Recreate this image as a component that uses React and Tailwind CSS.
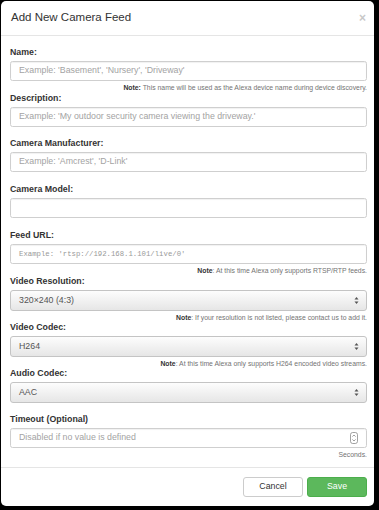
import React from "react";

const F = { fontFamily: '"Liberation Sans", Arial, sans-serif' };

function Label({ children }) {
  return (
    <div className="text-[8.8px] leading-[12px] font-bold text-[#333] mb-[3px]">{children}</div>
  );
}

function TextBox({ placeholder, mono, spinner }) {
  return (
    <div className="h-[20px] border border-[#cfcfcf] rounded-[2.5px] bg-white flex items-center pl-[8px] pr-[6px] shadow-[inset_0_1px_1px_rgba(0,0,0,0.06)]">
      <span
        className={
          mono
            ? "text-[7.3px] text-[#999] flex-1"
            : "text-[8.8px] text-[#a3a3a3] flex-1"
        }
        style={mono ? { fontFamily: '"Liberation Mono", "Courier New", monospace' } : undefined}
      >
        {placeholder}
      </span>
      {spinner && (
        <svg width="8" height="12" viewBox="0 0 8 12" className="mr-[2px]">
          <rect x="0.5" y="0.5" width="7" height="11" rx="2.2" fill="#fff" stroke="#8a8a8a" strokeWidth="0.8" />
          <path d="M2.4 4.6 L4 3 L5.6 4.6" fill="none" stroke="#777" strokeWidth="0.7" />
          <path d="M2.4 7.4 L4 9 L5.6 7.4" fill="none" stroke="#777" strokeWidth="0.7" />
        </svg>
      )}
    </div>
  );
}

function Select({ value }) {
  return (
    <div className="h-[21px] border border-[#c4c4c4] rounded-[3px] bg-gradient-to-b from-[#fdfdfd] to-[#e6e6e6] flex items-center pl-[8px] pr-[6px]">
      <span className="text-[8.8px] text-[#555] flex-1">{value}</span>
      <svg width="5" height="9" viewBox="0 0 5 9" className="mr-[1px]">
        <path d="M0.5 3.6 L2.5 1 L4.5 3.6 Z" fill="#555" />
        <path d="M0.5 5.4 L2.5 8 L4.5 5.4 Z" fill="#555" />
      </svg>
    </div>
  );
}

function Note({ children }) {
  return (
    <div className="text-right text-[6.85px] leading-[9px] text-[#737373] mt-[2px]">{children}</div>
  );
}

export default function App() {
  return (
    <div className="w-[379px] h-[510px] bg-black pt-[1px] pl-[1px] pr-[5px] pb-[4px]" style={F}>
      <div className="h-full bg-white rounded-[5px] flex flex-col">
        <div className="h-[35px] border-b border-[#e5e5e5] flex items-center justify-between pl-[10px] pr-[8px]">
          <div className="text-[11.5px] text-[#333]">Add New Camera Feed</div>
          <div className="text-[12px] font-bold text-[#c8c8c8] leading-none">×</div>
        </div>
        <div className="flex-1 pt-[10px] pl-[9px] pr-[7px]">
          <Label>Name:</Label>
          <TextBox placeholder="Example: 'Basement', 'Nursery', 'Driveway'" />
          <Note>
            <b className="text-[#333]">Note:</b> This name will be used as the Alexa device name during device discovery.
          </Note>

          <Label>Description:</Label>
          <TextBox placeholder="Example: 'My outdoor security camera viewing the driveway.'" />

          <div className="mt-[10px]">
            <Label>Camera Manufacturer:</Label>
            <TextBox placeholder="Example: 'Amcrest', 'D-Link'" />
          </div>

          <div className="mt-[11px]">
            <Label>Camera Model:</Label>
            <TextBox placeholder="" />
          </div>

          <div className="mt-[11px]">
            <Label>Feed URL:</Label>
            <TextBox mono placeholder="Example: 'rtsp://192.168.1.101/live/0'" />
            <Note>
              <b className="text-[#333]">Note</b>: At this time Alexa only supports RTSP/RTP feeds.
            </Note>
          </div>

          <Label>Video Resolution:</Label>
          <Select value="320×240 (4:3)" />
          <Note>
            <b className="text-[#333]">Note</b>: If your resolution is not listed, please contact us to add it.
          </Note>

          <div className="-mt-[1px]">
            <Label>Video Codec:</Label>
          </div>
          <Select value="H264" />
          <Note>
            <b className="text-[#333]">Note</b>: At this time Alexa only supports H264 encoded video streams.
          </Note>

          <div className="-mt-[1px]">
            <Label>Audio Codec:</Label>
          </div>
          <Select value="AAC" />

          <div className="mt-[10px]">
            <Label>Timeout (Optional)</Label>
            <TextBox spinner placeholder="Disabled if no value is defined" />
            <Note>Seconds.</Note>
          </div>
        </div>
        <div className="border-t border-[#e5e5e5] h-[39px] flex items-center justify-end gap-[4px] pr-[7px]">
          <div className="w-[60px] h-[20px] border border-[#ccc] rounded-[3px] bg-white flex items-center justify-center text-[8.8px] text-[#333]">
            Cancel
          </div>
          <div className="w-[60px] h-[20px] border border-[#4cae4c] rounded-[3px] bg-[#5cb85c] flex items-center justify-center text-[8.8px] text-white">
            Save
          </div>
        </div>
      </div>
    </div>
  );
}
